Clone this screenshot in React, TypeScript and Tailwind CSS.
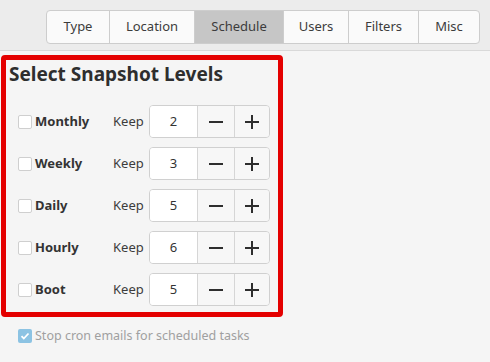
import React from "react";

const tabs = [
  { name: "Type", w: 62 },
  { name: "Location", w: 85 },
  { name: "Schedule", w: 89, active: true },
  { name: "Users", w: 65 },
  { name: "Filters", w: 70 },
  { name: "Misc", w: 61 },
];

const rows = [
  { label: "Monthly", v: 2 },
  { label: "Weekly", v: 3 },
  { label: "Daily", v: 5 },
  { label: "Hourly", v: 6 },
  { label: "Boot", v: 5 },
];

function Minus() {
  return (
    <svg width="16" height="16" viewBox="0 0 16 16">
      <path d="M1 8h14" stroke="#2e2e2e" strokeWidth="2" />
    </svg>
  );
}

function Plus() {
  return (
    <svg width="16" height="16" viewBox="0 0 16 16">
      <path d="M1 8h14M8 1v14" stroke="#2e2e2e" strokeWidth="2" />
    </svg>
  );
}

export default function App() {
  return (
    <div
      className="w-[490px] h-[362px] bg-[#f5f5f5] flex flex-col overflow-hidden text-[#333]"
      style={{ fontFamily: '"Noto Sans", "Open Sans", sans-serif' }}
    >
      <div className="h-[51px] bg-[#ececec] border-b border-[#d9d9d9] flex justify-end pr-[10px] pt-[10px] shrink-0">
        <div className="flex h-[34px] rounded-[4px] border border-[#cdcdcd] bg-[#fafafa] overflow-hidden">
          {tabs.map((t, i) => (
            <div
              key={t.name}
              style={{ width: t.w }}
              className={
                "flex items-center justify-center text-[13px] text-[#3c3c3c] " +
                (i > 0 ? "border-l border-[#cdcdcd] " : "") +
                (t.active ? "bg-[#c6c6c6]" : "")
              }
            >
              {t.name}
            </div>
          ))}
        </div>
      </div>
      <div className="ml-[1px] mt-[4px] w-[282px] h-[262px] border-[5px] border-[#e40000] rounded-[4px] bg-[#f5f5f5] flex flex-col shrink-0">
        <div className="h-[28px] pl-[3px] text-[19px] font-bold text-[#2e2e2e] leading-[28px] whitespace-nowrap">
          Select Snapshot Levels
        </div>
        <div className="mt-[17px] flex flex-col gap-[9px]">
          {rows.map((r) => (
            <div key={r.label} className="h-[33px] flex items-center pl-[12px]">
              <div className="w-[14px] h-[14px] rounded-[2px] border border-[#cfcfcf] bg-white shrink-0" />
              <div className="ml-[3px] w-[78px] text-[13px] font-bold text-[#333]">{r.label}</div>
              <div className="w-[36px] text-[13px] text-[#3c3c3c]">Keep</div>
              <div className="flex h-[33px] w-[121px] rounded-[4px] border border-[#d0d0d0] overflow-hidden">
                <div className="w-[47px] bg-white flex items-center justify-center text-[13px] text-[#333]">
                  {r.v}
                </div>
                <div className="w-[37px] border-l border-[#d6d6d6] bg-[#f7f7f7] flex items-center justify-center">
                  <Minus />
                </div>
                <div className="flex-1 border-l border-[#d6d6d6] bg-[#f7f7f7] flex items-center justify-center">
                  <Plus />
                </div>
              </div>
            </div>
          ))}
        </div>
      </div>
      <div className="mt-[12px] pl-[18px] flex items-center h-[14px]">
        <div className="w-[14px] h-[14px] rounded-[2px] bg-[#8cc3e3] flex items-center justify-center shrink-0">
          <svg width="10" height="10" viewBox="0 0 10 10">
            <path d="M1.5 5.2l2.3 2.3L8.5 2.5" stroke="white" strokeWidth="1.8" fill="none" />
          </svg>
        </div>
        <div className="ml-[3px] text-[12.5px] text-[#a0a0a0]">Stop cron emails for scheduled tasks</div>
      </div>
    </div>
  );
}
